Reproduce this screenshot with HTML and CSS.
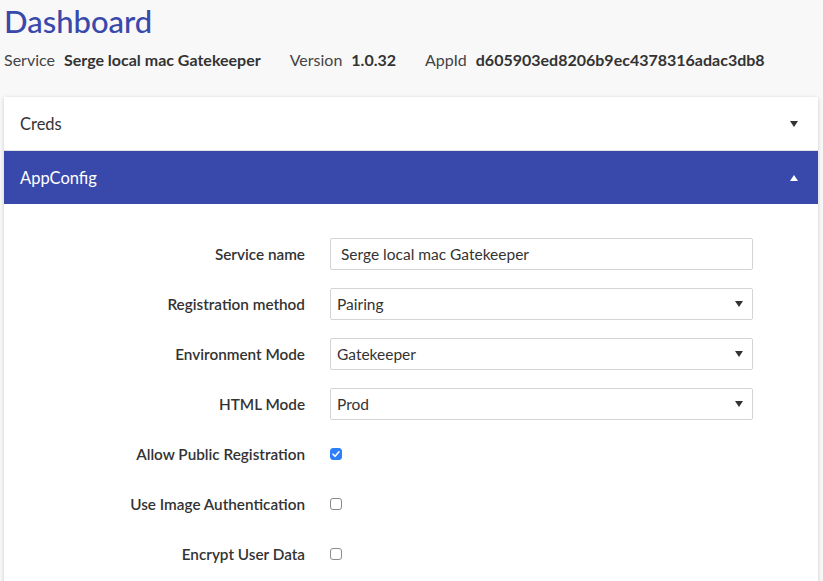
FILE: index.html
```html
<!DOCTYPE html>
<html>
<head>
<meta charset="utf-8">
<link rel="stylesheet" href="styles.css">
</head>
<body>
<div class="page">
  <h1 class="title">Dashboard</h1>
  <div class="info">
    <span class="info-item"><span class="info-key">Service</span><span class="info-val">Serge local mac Gatekeeper</span></span>
    <span class="info-item"><span class="info-key">Version</span><span class="info-val">1.0.32</span></span>
    <span class="info-item"><span class="info-key">AppId</span><span class="info-val">d605903ed8206b9ec4378316adac3db8</span></span>
  </div>
  <div class="card">
    <div class="panel-head">
      <span>Creds</span>
      <svg class="caret" width="8" height="6" viewBox="0 0 8 6"><path d="M0 0H8L4 6Z" fill="#333"/></svg>
    </div>
    <div class="panel-head active">
      <span>AppConfig</span>
      <svg class="caret" width="8" height="6" viewBox="0 0 8 6"><path d="M0 6H8L4 0Z" fill="#fff"/></svg>
    </div>
    <div class="panel-body">
      <form class="form">
        <label class="lbl">Service name</label>
        <div class="field"><div class="input">Serge local mac Gatekeeper</div></div>

        <label class="lbl">Registration method</label>
        <div class="field"><div class="input select">Pairing<svg class="sel-caret" width="8" height="6" viewBox="0 0 8 6"><path d="M0 0H8L4 6Z" fill="#333"/></svg></div></div>

        <label class="lbl">Environment Mode</label>
        <div class="field"><div class="input select">Gatekeeper<svg class="sel-caret" width="8" height="6" viewBox="0 0 8 6"><path d="M0 0H8L4 6Z" fill="#333"/></svg></div></div>

        <label class="lbl">HTML Mode</label>
        <div class="field"><div class="input select">Prod<svg class="sel-caret" width="8" height="6" viewBox="0 0 8 6"><path d="M0 0H8L4 6Z" fill="#333"/></svg></div></div>

        <label class="lbl">Allow Public Registration</label>
        <div class="field"><span class="check on"><svg width="12" height="12" viewBox="0 0 12 12"><path d="M3 6.2L5.1 8.3L9 3.8" fill="none" stroke="#fff" stroke-width="1.6" stroke-linecap="round" stroke-linejoin="round"/></svg></span></div>

        <label class="lbl">Use Image Authentication</label>
        <div class="field"><span class="check"></span></div>

        <label class="lbl">Encrypt User Data</label>
        <div class="field"><span class="check"></span></div>
      </form>
    </div>
  </div>
</div>
</body>
</html>
```

FILE: styles.css
```css
html, body {
  margin: 0;
  padding: 0;
  background: #f8f8f8;
  font-family: "Lato", "Noto Sans", sans-serif;
  color: #333;
}

.page {
  padding: 0 5px 0 4px;
}

.title {
  margin: 0;
  padding-top: 3px;
  font-size: 31px;
  line-height: 36px;
  font-weight: 500;
  color: #3949ab;
}

.info {
  display: flex;
  gap: 29px;
  margin-top: 11px;
  font-size: 16px;
  line-height: 20px;
}

.info-key {
  color: #444;
  margin-right: 9px;
}

.info-val {
  font-weight: 700;
  color: #333;
}

.card {
  margin-top: 27px;
  background: #fff;
  box-shadow: 0 1px 4px rgba(0, 0, 0, 0.18);
  height: 500px;
}

.panel-head {
  display: flex;
  justify-content: space-between;
  align-items: center;
  height: 53px;
  padding: 0 20px 0 16px;
  font-size: 16.5px;
  color: #333;
  border-bottom: 1px solid #e0e0e0;
}

.panel-head.active {
  background: #3949ab;
  color: #fff;
  border-bottom: none;
}

.caret {
  display: block;
}

.panel-body {
  padding-top: 34px;
}

.form {
  display: grid;
  grid-template-columns: 301px 423px;
  column-gap: 25px;
  row-gap: 18px;
  grid-auto-rows: 32px;
  align-items: center;
}

.lbl {
  text-align: right;
  font-size: 15.3px;
  font-weight: 600;
  color: #333;
}

.field {
  display: flex;
  align-items: center;
  height: 100%;
}

.input {
  box-sizing: border-box;
  width: 100%;
  height: 32px;
  border: 1px solid #d4d4d4;
  border-radius: 2px;
  padding: 0 10px;
  display: flex;
  align-items: center;
  font-size: 15.5px;
  color: #333;
}

.input.select {
  padding-left: 6px;
  justify-content: space-between;
  padding-right: 9px;
}

.sel-caret {
  display: block;
}

.check {
  box-sizing: border-box;
  width: 12px;
  height: 12px;
  border: 1px solid #8a8a8a;
  border-radius: 3px;
  background: #fff;
  display: flex;
}

.check.on {
  background: #2d7ff9;
  border-color: #2d7ff9;
}

.check.on svg {
  display: block;
  margin: -1px;
}
```
